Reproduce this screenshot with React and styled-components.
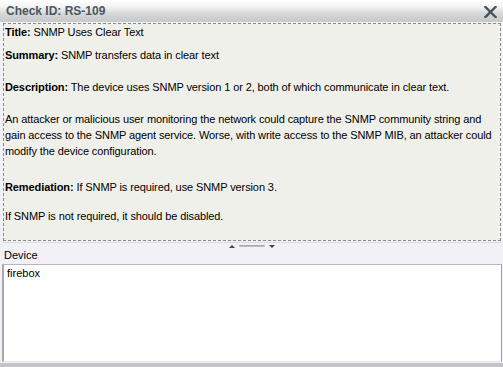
import styled, { createGlobalStyle } from "styled-components";

const GlobalStyle = createGlobalStyle`
  html, body {
    margin: 0;
    padding: 0;
    background: #f2f2f6;
  }
  body {
    font-family: "Liberation Sans", Arial, sans-serif;
    font-size: 11px;
    color: #000;
  }
`;

const Window = styled.div`
  height: 367px;
  display: flex;
  flex-direction: column;
  box-sizing: border-box;
  border-bottom: 4px solid #c4c4c8;
  overflow: hidden;
`;

const Header = styled.header`
  height: 22px;
  flex: none;
  display: flex;
  align-items: center;
  justify-content: space-between;
  padding: 0 6px;
  box-sizing: border-box;
  background: linear-gradient(to bottom, #ffffff 0%, #f4f4f4 30%, #d6d8d8 60%, #c6c9ca 100%);
`;

const HeaderTitle = styled.h1`
  margin: 0;
  font-size: 12px;
  font-weight: bold;
  color: #4b5661;
  line-height: 22px;
`;

const CloseButton = styled.button`
  border: 0;
  padding: 0;
  background: none;
  width: 14px;
  height: 14px;
  display: flex;
  align-items: center;
  justify-content: center;
  margin-top: 2px;
`;

const Details = styled.section`
  flex: none;
  height: 218px;
  margin: 1px 2px 0 3px;
  box-sizing: border-box;
  border: 1px dashed #8a8a8a;
  background: #f0f0eb;
  padding: 0 1px;
  line-height: 16px;
  letter-spacing: -0.1px;
`;

const Para = styled.p`
  margin: ${(p) => p.$gap || 0}px 0 0 0;
  white-space: ${(p) => (p.$keep ? "nowrap" : "normal")};
`;

const Label = styled.b`
  font-weight: bold;
`;

const Splitter = styled.div`
  height: 6px;
  flex: none;
  display: flex;
  align-items: center;
  justify-content: center;
  gap: 4px;
  border-top: 1px solid #dcdce0;
  margin: 1px 2px 0 3px;
`;

const Arrow = styled.span`
  width: 0;
  height: 0;
  border-left: 3px solid transparent;
  border-right: 3px solid transparent;
  ${(p) =>
    p.$down
      ? "border-top: 3px solid #444;"
      : "border-bottom: 3px solid #444;"}
`;

const Grip = styled.span`
  width: 26px;
  height: 2px;
  background: linear-gradient(to bottom, #9aa0a8, #c8ccd2);
  border-radius: 1px;
`;

const FieldLabel = styled.div`
  flex: none;
  padding-left: 4px;
  height: 15px;
  line-height: 13px;
`;

const DeviceList = styled.div`
  flex: 1;
  margin: 0 1px 1px 2px;
  background: #ffffff;
  border-left: 2px solid #a8a8ac;
  border-top: 1px solid #b8b8bc;
  border-right: 1px solid #a0a0a4;
  border-bottom: 1px solid #e4e4e8;
  padding: 1px 3px;
  line-height: 14px;
`;

export default function App() {
  return (
    <>
      <GlobalStyle />
      <Window>
        <Header>
          <HeaderTitle>Check ID: RS-109</HeaderTitle>
          <CloseButton aria-label="Close">
            <svg width="13" height="12" viewBox="0 0 13 12">
              <path
                d="M1.5 1 L11.5 11 M11.5 1 L1.5 11"
                stroke="#4a5058"
                strokeWidth="2.4"
                strokeLinecap="square"
              />
            </svg>
          </CloseButton>
        </Header>
        <Details>
          <Para>
            <Label>Title:</Label> SNMP Uses Clear Text
          </Para>
          <Para $gap={7}>
            <Label>Summary:</Label> SNMP transfers data in clear text
          </Para>
          <Para $gap={16}>
            <Label>Description:</Label> The device uses SNMP version 1 or 2,
            both of which communicate in clear text.
          </Para>
          <Para $gap={16} $keep>
            An attacker or malicious user monitoring the network could capture
            the SNMP community string and
            <br />
            gain access to the SNMP agent service. Worse, with write access to
            the SNMP MIB, an attacker could
            <br />
            modify the device configuration.
          </Para>
          <Para $gap={20}>
            <Label>Remediation:</Label> If SNMP is required, use SNMP version 3.
          </Para>
          <Para $gap={13}>If SNMP is not required, it should be disabled.</Para>
        </Details>
        <Splitter>
          <Arrow />
          <Grip />
          <Arrow $down />
        </Splitter>
        <FieldLabel>Device</FieldLabel>
        <DeviceList>firebox</DeviceList>
      </Window>
    </>
  );
}
